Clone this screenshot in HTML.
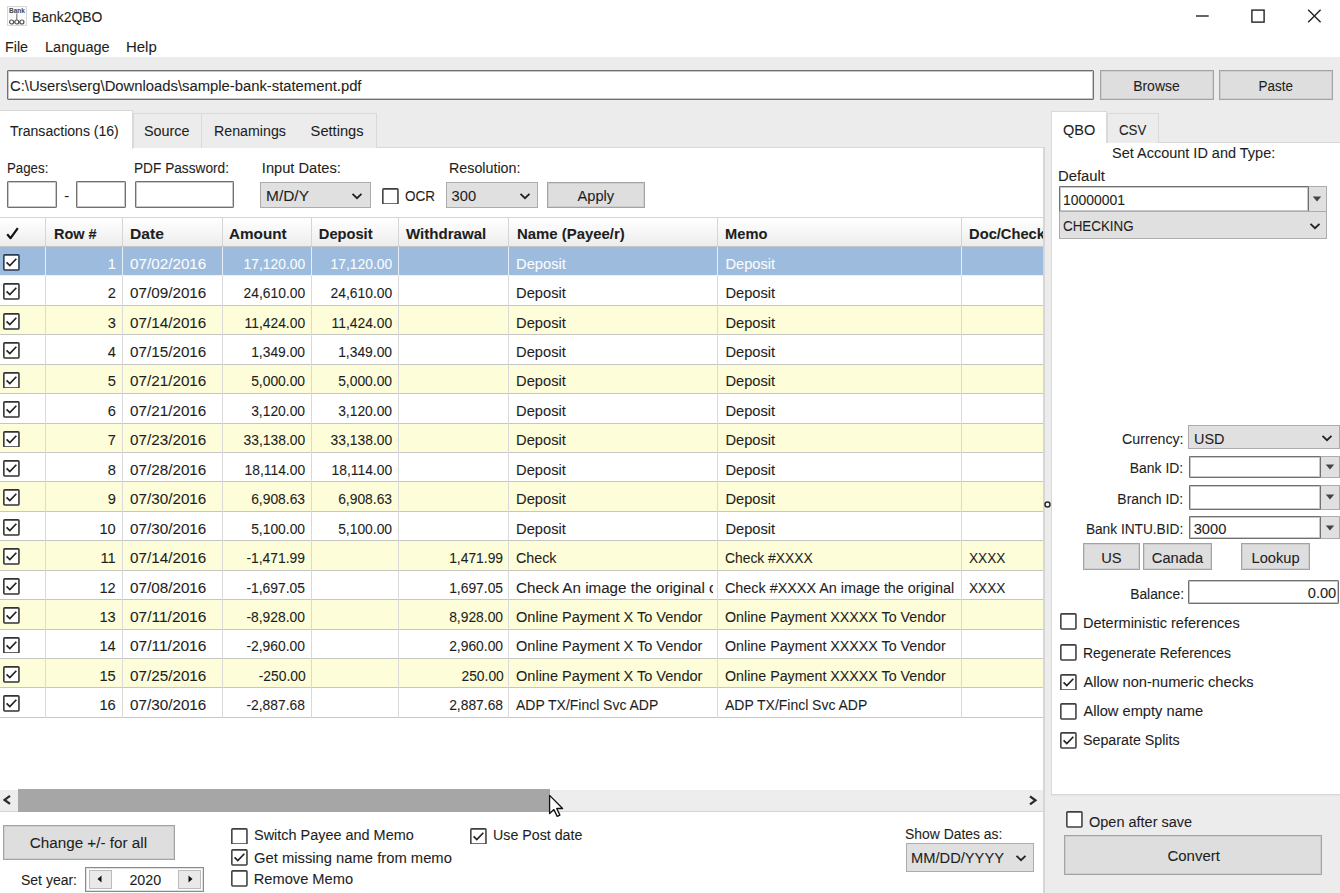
<!DOCTYPE html>
<html><head><meta charset="utf-8"><title>Bank2QBO</title>
<style>
html,body{margin:0;padding:0}
body{width:1340px;height:893px;overflow:hidden;position:relative;background:#ececec;font-family:"Liberation Sans", sans-serif;font-size:14.67px;color:#000}
body div{position:absolute;white-space:pre}
.t{-webkit-text-stroke:0.25px currentColor}
</style></head><body>
<div style="left:0px;top:0px;width:1340px;height:57px;background:#fff"></div>
<svg style="position:absolute;left:7px;top:5.5px" width="20" height="20" viewBox="0 0 20 20"><rect x="0.5" y="0.5" width="19" height="19" fill="#fafafa" stroke="#d8d8d8"/><text x="10" y="7" font-family="Liberation Sans" font-size="7.2" font-weight="700" text-anchor="middle" fill="#444" textLength="16" lengthAdjust="spacingAndGlyphs">Bank</text><line x1="9.8" y1="7.5" x2="9.8" y2="16" stroke="#777" stroke-width="1.1"/><line x1="4" y1="16" x2="16" y2="16" stroke="#777" stroke-width="1.1"/><circle cx="4.6" cy="16" r="2" fill="#fff" stroke="#555" stroke-width="1.2"/><circle cx="9.8" cy="16" r="2" fill="#fff" stroke="#555" stroke-width="1.2"/><circle cx="14.9" cy="16" r="2" fill="#fff" stroke="#555" stroke-width="1.2"/></svg>
<div style="left:32.32px;top:9.88px;font-size:14.67px;line-height:14.67px;color:#1e1e1e;-webkit-text-stroke:0.08px #1e1e1e;transform:scaleX(0.9495);transform-origin:left;">Bank2QBO</div>
<div style="left:5.42px;top:40.28px;font-size:14.67px;line-height:14.67px;color:#1e1e1e;-webkit-text-stroke:0.08px #1e1e1e;transform:scaleX(0.9748);transform-origin:left;">File</div>
<div style="left:44.82px;top:40.28px;font-size:14.67px;line-height:14.67px;color:#1e1e1e;-webkit-text-stroke:0.08px #1e1e1e;transform:scaleX(0.9913);transform-origin:left;">Language</div>
<div style="left:126.02px;top:40.28px;font-size:14.67px;line-height:14.67px;color:#1e1e1e;-webkit-text-stroke:0.08px #1e1e1e;transform:scaleX(1.0178);transform-origin:left;">Help</div>
<svg style="position:absolute;left:1190px;top:4px" width="140" height="24" viewBox="0 0 140 24"><line x1="6" y1="12" x2="18.7" y2="12" stroke="#222" stroke-width="1.4"/><rect x="61.9" y="6.1" width="12.2" height="12" fill="none" stroke="#222" stroke-width="1.4"/><path d="M118.2 5.8 L130.6 18.2 M130.6 5.8 L118.2 18.2" stroke="#222" stroke-width="1.4"/></svg>
<div style="left:7.3px;top:69.8px;width:1086.3px;height:30.4px;background:#fff;border:1px solid #707070;box-shadow:inset 0 0 0 1px rgba(130,130,130,0.45);box-sizing:border-box;border-radius:1px;"></div>
<div style="left:10.12px;top:78.78px;font-size:14.67px;line-height:14.67px;color:#1e1e1e;-webkit-text-stroke:0.08px #1e1e1e;transform:scaleX(1.0105);transform-origin:left;">C:\Users\serg\Downloads\sample-bank-statement.pdf</div>
<div style="left:1100px;top:70px;width:113.5px;height:29.5px;background:#dedede;border:1px solid #a3a3a3;box-shadow:inset 0 0 0 1px rgba(190,190,190,0.5);box-sizing:border-box;"></div>
<div style="left:1131.96px;top:78.58px;font-size:14.67px;line-height:14.67px;color:#1e1e1e;-webkit-text-stroke:0.08px #1e1e1e;transform:scaleX(0.9534);transform-origin:center;">Browse</div>
<div style="left:1218.6px;top:70px;width:114px;height:29.5px;background:#dedede;border:1px solid #a3a3a3;box-shadow:inset 0 0 0 1px rgba(190,190,190,0.5);box-sizing:border-box;"></div>
<div style="left:1256.86px;top:78.58px;font-size:14.67px;line-height:14.67px;color:#1e1e1e;-webkit-text-stroke:0.08px #1e1e1e;transform:scaleX(0.9162);transform-origin:center;">Paste</div>
<div style="left:0px;top:147px;width:1045px;height:760px;background:#fff;border:1px solid #d9d9d9;border-right:2px solid #d6d6d6;box-sizing:border-box;border-left:none"></div>
<div style="left:132.5px;top:113.4px;width:69.5px;height:34.6px;background:#ececec;border:1px solid #d9d9d9;border-bottom:none;box-sizing:border-box"></div>
<div style="left:201.5px;top:113.4px;width:97px;height:34.6px;background:#ececec;border:1px solid #d9d9d9;border-bottom:none;box-sizing:border-box;border-left:none"></div>
<div style="left:297.5px;top:113.4px;width:79px;height:34.6px;background:#ececec;border:1px solid #d9d9d9;border-bottom:none;box-sizing:border-box;border-left:none"></div>
<div style="left:0px;top:110px;width:133px;height:38.5px;background:#fff;border:1px solid #d9d9d9;border-bottom:none;border-left:none;box-sizing:border-box"></div>
<div style="left:10.32px;top:124.28px;font-size:14.67px;line-height:14.67px;color:#1e1e1e;-webkit-text-stroke:0.08px #1e1e1e;transform:scaleX(0.9586);transform-origin:left;">Transactions (16)</div>
<div style="left:143.92px;top:124.28px;font-size:14.67px;line-height:14.67px;color:#1e1e1e;-webkit-text-stroke:0.08px #1e1e1e;transform:scaleX(0.9803);transform-origin:left;">Source</div>
<div style="left:214.42px;top:124.28px;font-size:14.67px;line-height:14.67px;color:#1e1e1e;-webkit-text-stroke:0.08px #1e1e1e;transform:scaleX(0.9701);transform-origin:left;">Renamings</div>
<div style="left:310.62px;top:124.28px;font-size:14.67px;line-height:14.67px;color:#1e1e1e;-webkit-text-stroke:0.08px #1e1e1e;">Settings</div>
<div style="left:6.92px;top:161.48px;font-size:14.67px;line-height:14.67px;color:#1e1e1e;-webkit-text-stroke:0.08px #1e1e1e;transform:scaleX(0.9055);transform-origin:left;">Pages:</div>
<div style="left:134.22px;top:161.48px;font-size:14.67px;line-height:14.67px;color:#1e1e1e;-webkit-text-stroke:0.08px #1e1e1e;transform:scaleX(0.9328);transform-origin:left;">PDF Password:</div>
<div style="left:261.82px;top:161.48px;font-size:14.67px;line-height:14.67px;color:#1e1e1e;-webkit-text-stroke:0.08px #1e1e1e;">Input Dates:</div>
<div style="left:448.62px;top:161.48px;font-size:14.67px;line-height:14.67px;color:#1e1e1e;-webkit-text-stroke:0.08px #1e1e1e;transform:scaleX(0.9741);transform-origin:left;">Resolution:</div>
<div style="left:7px;top:181.4px;width:50.2px;height:27px;background:#fff;border:1px solid #707070;box-shadow:inset 0 0 0 1px rgba(130,130,130,0.45);box-sizing:border-box;border-radius:1px;"></div>
<div style="left:75.5px;top:181.4px;width:50.4px;height:27px;background:#fff;border:1px solid #707070;box-shadow:inset 0 0 0 1px rgba(130,130,130,0.45);box-sizing:border-box;border-radius:1px;"></div>
<div style="left:64.15px;top:189.28px;font-size:14.67px;line-height:14.67px;color:#1e1e1e;-webkit-text-stroke:0.08px #1e1e1e;">-</div>
<div style="left:134.5px;top:181.4px;width:99.6px;height:27px;background:#fff;border:1px solid #707070;box-shadow:inset 0 0 0 1px rgba(130,130,130,0.45);box-sizing:border-box;border-radius:1px;"></div>
<div style="left:259.6px;top:181.6px;width:111.3px;height:26.6px;background:#e0e0e0;border:1px solid #acacac;box-sizing:border-box;"></div>
<div style="left:265.92px;top:189.28px;font-size:14.67px;line-height:14.67px;color:#1e1e1e;-webkit-text-stroke:0.08px #1e1e1e;transform:scaleX(1.0547);transform-origin:left;">M/D/Y</div>
<svg style="position:absolute;left:351px;top:191.5px" width="12" height="8" viewBox="0 0 12 8"><path d="M1.5 1.8 L6 6.2 L10.5 1.8" fill="none" stroke="#222" stroke-width="1.8"/></svg>
<svg style="position:absolute;left:382.3px;top:187.6px" width="16.8" height="16.8" viewBox="0 0 16 16"><rect x="0.8" y="0.8" width="14.4" height="14.4" rx="0.8" fill="#fff" stroke="#404040" stroke-width="1.5"/></svg>
<div style="left:404.92px;top:189.28px;font-size:14.67px;line-height:14.67px;color:#1e1e1e;-webkit-text-stroke:0.08px #1e1e1e;transform:scaleX(0.9225);transform-origin:left;">OCR</div>
<div style="left:446px;top:182px;width:92px;height:25.8px;background:#e0e0e0;border:1px solid #acacac;box-sizing:border-box;"></div>
<div style="left:451.62px;top:189.28px;font-size:14.67px;line-height:14.67px;color:#1e1e1e;-webkit-text-stroke:0.08px #1e1e1e;">300</div>
<svg style="position:absolute;left:519px;top:191.5px" width="12" height="8" viewBox="0 0 12 8"><path d="M1.5 1.8 L6 6.2 L10.5 1.8" fill="none" stroke="#222" stroke-width="1.8"/></svg>
<div style="left:546.9px;top:182px;width:97.8px;height:25.8px;background:#dedede;border:1px solid #a3a3a3;box-shadow:inset 0 0 0 1px rgba(190,190,190,0.5);box-sizing:border-box;"></div>
<div style="left:577.46px;top:189.28px;font-size:14.67px;line-height:14.67px;color:#1e1e1e;-webkit-text-stroke:0.08px #1e1e1e;">Apply</div>
<div style="left:0px;top:216.5px;width:1043px;height:1px;background:#d5d5d5"></div>
<div style="left:0px;top:217.5px;width:1043px;height:29px;background:linear-gradient(#ffffff,#f6f6f6 50%,#ebebeb)"></div>
<div style="left:45.1px;top:217.5px;width:1.2px;height:29px;background:#d6d6d6"></div>
<div style="left:122.3px;top:217.5px;width:1.2px;height:29px;background:#d6d6d6"></div>
<div style="left:221.8px;top:217.5px;width:1.2px;height:29px;background:#d6d6d6"></div>
<div style="left:310.8px;top:217.5px;width:1.2px;height:29px;background:#d6d6d6"></div>
<div style="left:397.5px;top:217.5px;width:1.2px;height:29px;background:#d6d6d6"></div>
<div style="left:507.5px;top:217.5px;width:1.2px;height:29px;background:#d6d6d6"></div>
<div style="left:716.7px;top:217.5px;width:1.2px;height:29px;background:#d6d6d6"></div>
<div style="left:960.9px;top:217.5px;width:1.2px;height:29px;background:#d6d6d6"></div>
<svg style="position:absolute;left:6px;top:227px" width="13" height="13" viewBox="0 0 13 13"><path d="M1.2 7.2 L4.6 11.2 L11.8 1.2" fill="none" stroke="#111" stroke-width="2.2" stroke-linejoin="round"/></svg>
<div style="left:54.02px;top:227.48px;font-size:14.67px;line-height:14.67px;color:#1e1e1e;-webkit-text-stroke:0.08px #1e1e1e;font-weight:700;transform:scaleX(0.9879);transform-origin:left;">Row #</div>
<div style="left:130.12px;top:227.48px;font-size:14.67px;line-height:14.67px;color:#1e1e1e;-webkit-text-stroke:0.08px #1e1e1e;font-weight:700;transform:scaleX(1.0655);transform-origin:left;">Date</div>
<div style="left:229.32px;top:227.48px;font-size:14.67px;line-height:14.67px;color:#1e1e1e;-webkit-text-stroke:0.08px #1e1e1e;font-weight:700;transform:scaleX(1.041);transform-origin:left;">Amount</div>
<div style="left:318.82px;top:227.48px;font-size:14.67px;line-height:14.67px;color:#1e1e1e;-webkit-text-stroke:0.08px #1e1e1e;font-weight:700;">Deposit</div>
<div style="left:406.32px;top:227.48px;font-size:14.67px;line-height:14.67px;color:#1e1e1e;-webkit-text-stroke:0.08px #1e1e1e;font-weight:700;transform:scaleX(1.0277);transform-origin:left;">Withdrawal</div>
<div style="left:516.82px;top:227.48px;font-size:14.67px;line-height:14.67px;color:#1e1e1e;-webkit-text-stroke:0.08px #1e1e1e;font-weight:700;transform:scaleX(1.0177);transform-origin:left;">Name (Payee/r)</div>
<div style="left:725.12px;top:227.48px;font-size:14.67px;line-height:14.67px;color:#1e1e1e;-webkit-text-stroke:0.08px #1e1e1e;font-weight:700;">Memo</div>
<div style="left:968.00px;top:225.48px;width:75.00px;height:20.67px;overflow:hidden"><div style="left:1.12px;top:2px;font-size:14.67px;line-height:14.67px;color:#1e1e1e;-webkit-text-stroke:0.08px #1e1e1e;font-weight:700;">Doc/Check</div></div>
<div style="left:0px;top:246.93px;width:1043px;height:29.436px;background:#9dbbdc"></div>
<div style="left:0px;top:275.366px;width:1043px;height:1.1px;background:#e8f0f8"></div>
<div style="left:45.1px;top:246.93px;width:1.2px;height:29.436px;background:#e6eef8"></div>
<div style="left:122.3px;top:246.93px;width:1.2px;height:29.436px;background:#e6eef8"></div>
<div style="left:221.8px;top:246.93px;width:1.2px;height:29.436px;background:#e6eef8"></div>
<div style="left:310.8px;top:246.93px;width:1.2px;height:29.436px;background:#e6eef8"></div>
<div style="left:397.5px;top:246.93px;width:1.2px;height:29.436px;background:#e6eef8"></div>
<div style="left:507.5px;top:246.93px;width:1.2px;height:29.436px;background:#e6eef8"></div>
<div style="left:716.7px;top:246.93px;width:1.2px;height:29.436px;background:#e6eef8"></div>
<div style="left:960.9px;top:246.93px;width:1.2px;height:29.436px;background:#e6eef8"></div>
<svg style="position:absolute;left:3.2px;top:253.93px" width="16.8" height="16.8" viewBox="0 0 16 16"><rect x="0.8" y="0.8" width="14.4" height="14.4" rx="0.8" fill="#fff" stroke="#2a3a50" stroke-width="1.5"/><path d="M3.4 8.0 L6.5 11.1 L12.7 4.5" fill="none" stroke="#222" stroke-width="1.6"/></svg>
<div style="left:107.63px;top:256.71px;font-size:14.67px;line-height:14.67px;color:#fbfdff;-webkit-text-stroke:0.08px #fbfdff;">1</div>
<div style="left:129.82px;top:256.71px;font-size:14.67px;line-height:14.67px;color:#fbfdff;-webkit-text-stroke:0.08px #fbfdff;transform:scaleX(1.0404);transform-origin:left;">07/02/2016</div>
<div style="left:240.08px;top:256.71px;font-size:14.67px;line-height:14.67px;color:#fbfdff;-webkit-text-stroke:0.08px #fbfdff;transform:scaleX(0.945);transform-origin:right;">17,120.00</div>
<div style="left:326.68px;top:256.71px;font-size:14.67px;line-height:14.67px;color:#fbfdff;-webkit-text-stroke:0.08px #fbfdff;transform:scaleX(0.945);transform-origin:right;">17,120.00</div>
<div style="left:515.00px;top:254.70999999999998px;width:198.00px;height:20.67px;overflow:hidden"><div style="left:1.12px;top:2px;font-size:14.67px;line-height:14.67px;color:#fbfdff;-webkit-text-stroke:0.08px #fbfdff;">Deposit</div></div>
<div style="left:724.30px;top:254.70999999999998px;width:232.70px;height:20.67px;overflow:hidden"><div style="left:1.12px;top:2px;font-size:14.67px;line-height:14.67px;color:#fbfdff;-webkit-text-stroke:0.08px #fbfdff;">Deposit</div></div>
<div style="left:0px;top:276.366px;width:1043px;height:29.436px;background:#ffffff"></div>
<div style="left:0px;top:304.80199999999996px;width:1043px;height:1.1px;background:#c6c6c2"></div>
<div style="left:45.1px;top:276.366px;width:1.2px;height:29.436px;background:#d9d9d9"></div>
<div style="left:122.3px;top:276.366px;width:1.2px;height:29.436px;background:#d9d9d9"></div>
<div style="left:221.8px;top:276.366px;width:1.2px;height:29.436px;background:#d9d9d9"></div>
<div style="left:310.8px;top:276.366px;width:1.2px;height:29.436px;background:#d9d9d9"></div>
<div style="left:397.5px;top:276.366px;width:1.2px;height:29.436px;background:#d9d9d9"></div>
<div style="left:507.5px;top:276.366px;width:1.2px;height:29.436px;background:#d9d9d9"></div>
<div style="left:716.7px;top:276.366px;width:1.2px;height:29.436px;background:#d9d9d9"></div>
<div style="left:960.9px;top:276.366px;width:1.2px;height:29.436px;background:#d9d9d9"></div>
<svg style="position:absolute;left:3.2px;top:283.366px" width="16.8" height="16.8" viewBox="0 0 16 16"><rect x="0.8" y="0.8" width="14.4" height="14.4" rx="0.8" fill="#fff" stroke="#333" stroke-width="1.5"/><path d="M3.4 8.0 L6.5 11.1 L12.7 4.5" fill="none" stroke="#222" stroke-width="1.6"/></svg>
<div style="left:107.63px;top:286.15px;font-size:14.67px;line-height:14.67px;color:#1e1e1e;-webkit-text-stroke:0.08px #1e1e1e;">2</div>
<div style="left:129.82px;top:286.15px;font-size:14.67px;line-height:14.67px;color:#1e1e1e;-webkit-text-stroke:0.08px #1e1e1e;transform:scaleX(1.0404);transform-origin:left;">07/09/2016</div>
<div style="left:240.08px;top:286.15px;font-size:14.67px;line-height:14.67px;color:#1e1e1e;-webkit-text-stroke:0.08px #1e1e1e;transform:scaleX(0.945);transform-origin:right;">24,610.00</div>
<div style="left:326.68px;top:286.15px;font-size:14.67px;line-height:14.67px;color:#1e1e1e;-webkit-text-stroke:0.08px #1e1e1e;transform:scaleX(0.945);transform-origin:right;">24,610.00</div>
<div style="left:515.00px;top:284.15px;width:198.00px;height:20.67px;overflow:hidden"><div style="left:1.12px;top:2px;font-size:14.67px;line-height:14.67px;color:#1e1e1e;-webkit-text-stroke:0.08px #1e1e1e;">Deposit</div></div>
<div style="left:724.30px;top:284.15px;width:232.70px;height:20.67px;overflow:hidden"><div style="left:1.12px;top:2px;font-size:14.67px;line-height:14.67px;color:#1e1e1e;-webkit-text-stroke:0.08px #1e1e1e;">Deposit</div></div>
<div style="left:0px;top:305.802px;width:1043px;height:29.436px;background:#fdfdd9"></div>
<div style="left:0px;top:334.238px;width:1043px;height:1.1px;background:#c6c6c2"></div>
<div style="left:45.1px;top:305.802px;width:1.2px;height:29.436px;background:#d9d9d9"></div>
<div style="left:122.3px;top:305.802px;width:1.2px;height:29.436px;background:#d9d9d9"></div>
<div style="left:221.8px;top:305.802px;width:1.2px;height:29.436px;background:#d9d9d9"></div>
<div style="left:310.8px;top:305.802px;width:1.2px;height:29.436px;background:#d9d9d9"></div>
<div style="left:397.5px;top:305.802px;width:1.2px;height:29.436px;background:#d9d9d9"></div>
<div style="left:507.5px;top:305.802px;width:1.2px;height:29.436px;background:#d9d9d9"></div>
<div style="left:716.7px;top:305.802px;width:1.2px;height:29.436px;background:#d9d9d9"></div>
<div style="left:960.9px;top:305.802px;width:1.2px;height:29.436px;background:#d9d9d9"></div>
<svg style="position:absolute;left:3.2px;top:312.802px" width="16.8" height="16.8" viewBox="0 0 16 16"><rect x="0.8" y="0.8" width="14.4" height="14.4" rx="0.8" fill="#fff" stroke="#333" stroke-width="1.5"/><path d="M3.4 8.0 L6.5 11.1 L12.7 4.5" fill="none" stroke="#222" stroke-width="1.6"/></svg>
<div style="left:107.63px;top:315.58px;font-size:14.67px;line-height:14.67px;color:#1e1e1e;-webkit-text-stroke:0.08px #1e1e1e;">3</div>
<div style="left:129.82px;top:315.58px;font-size:14.67px;line-height:14.67px;color:#1e1e1e;-webkit-text-stroke:0.08px #1e1e1e;transform:scaleX(1.0404);transform-origin:left;">07/14/2016</div>
<div style="left:241.16px;top:315.58px;font-size:14.67px;line-height:14.67px;color:#1e1e1e;-webkit-text-stroke:0.08px #1e1e1e;transform:scaleX(0.945);transform-origin:right;">11,424.00</div>
<div style="left:327.76px;top:315.58px;font-size:14.67px;line-height:14.67px;color:#1e1e1e;-webkit-text-stroke:0.08px #1e1e1e;transform:scaleX(0.945);transform-origin:right;">11,424.00</div>
<div style="left:515.00px;top:313.58px;width:198.00px;height:20.67px;overflow:hidden"><div style="left:1.12px;top:2px;font-size:14.67px;line-height:14.67px;color:#1e1e1e;-webkit-text-stroke:0.08px #1e1e1e;">Deposit</div></div>
<div style="left:724.30px;top:313.58px;width:232.70px;height:20.67px;overflow:hidden"><div style="left:1.12px;top:2px;font-size:14.67px;line-height:14.67px;color:#1e1e1e;-webkit-text-stroke:0.08px #1e1e1e;">Deposit</div></div>
<div style="left:0px;top:335.238px;width:1043px;height:29.436px;background:#ffffff"></div>
<div style="left:0px;top:363.674px;width:1043px;height:1.1px;background:#c6c6c2"></div>
<div style="left:45.1px;top:335.238px;width:1.2px;height:29.436px;background:#d9d9d9"></div>
<div style="left:122.3px;top:335.238px;width:1.2px;height:29.436px;background:#d9d9d9"></div>
<div style="left:221.8px;top:335.238px;width:1.2px;height:29.436px;background:#d9d9d9"></div>
<div style="left:310.8px;top:335.238px;width:1.2px;height:29.436px;background:#d9d9d9"></div>
<div style="left:397.5px;top:335.238px;width:1.2px;height:29.436px;background:#d9d9d9"></div>
<div style="left:507.5px;top:335.238px;width:1.2px;height:29.436px;background:#d9d9d9"></div>
<div style="left:716.7px;top:335.238px;width:1.2px;height:29.436px;background:#d9d9d9"></div>
<div style="left:960.9px;top:335.238px;width:1.2px;height:29.436px;background:#d9d9d9"></div>
<svg style="position:absolute;left:3.2px;top:342.238px" width="16.8" height="16.8" viewBox="0 0 16 16"><rect x="0.8" y="0.8" width="14.4" height="14.4" rx="0.8" fill="#fff" stroke="#333" stroke-width="1.5"/><path d="M3.4 8.0 L6.5 11.1 L12.7 4.5" fill="none" stroke="#222" stroke-width="1.6"/></svg>
<div style="left:107.63px;top:345.02px;font-size:14.67px;line-height:14.67px;color:#1e1e1e;-webkit-text-stroke:0.08px #1e1e1e;">4</div>
<div style="left:129.82px;top:345.02px;font-size:14.67px;line-height:14.67px;color:#1e1e1e;-webkit-text-stroke:0.08px #1e1e1e;transform:scaleX(1.0404);transform-origin:left;">07/15/2016</div>
<div style="left:248.22px;top:345.02px;font-size:14.67px;line-height:14.67px;color:#1e1e1e;-webkit-text-stroke:0.08px #1e1e1e;transform:scaleX(0.945);transform-origin:right;">1,349.00</div>
<div style="left:334.82px;top:345.02px;font-size:14.67px;line-height:14.67px;color:#1e1e1e;-webkit-text-stroke:0.08px #1e1e1e;transform:scaleX(0.945);transform-origin:right;">1,349.00</div>
<div style="left:515.00px;top:343.02px;width:198.00px;height:20.67px;overflow:hidden"><div style="left:1.12px;top:2px;font-size:14.67px;line-height:14.67px;color:#1e1e1e;-webkit-text-stroke:0.08px #1e1e1e;">Deposit</div></div>
<div style="left:724.30px;top:343.02px;width:232.70px;height:20.67px;overflow:hidden"><div style="left:1.12px;top:2px;font-size:14.67px;line-height:14.67px;color:#1e1e1e;-webkit-text-stroke:0.08px #1e1e1e;">Deposit</div></div>
<div style="left:0px;top:364.674px;width:1043px;height:29.436px;background:#fdfdd9"></div>
<div style="left:0px;top:393.10999999999996px;width:1043px;height:1.1px;background:#c6c6c2"></div>
<div style="left:45.1px;top:364.674px;width:1.2px;height:29.436px;background:#d9d9d9"></div>
<div style="left:122.3px;top:364.674px;width:1.2px;height:29.436px;background:#d9d9d9"></div>
<div style="left:221.8px;top:364.674px;width:1.2px;height:29.436px;background:#d9d9d9"></div>
<div style="left:310.8px;top:364.674px;width:1.2px;height:29.436px;background:#d9d9d9"></div>
<div style="left:397.5px;top:364.674px;width:1.2px;height:29.436px;background:#d9d9d9"></div>
<div style="left:507.5px;top:364.674px;width:1.2px;height:29.436px;background:#d9d9d9"></div>
<div style="left:716.7px;top:364.674px;width:1.2px;height:29.436px;background:#d9d9d9"></div>
<div style="left:960.9px;top:364.674px;width:1.2px;height:29.436px;background:#d9d9d9"></div>
<svg style="position:absolute;left:3.2px;top:371.674px" width="16.8" height="16.8" viewBox="0 0 16 16"><rect x="0.8" y="0.8" width="14.4" height="14.4" rx="0.8" fill="#fff" stroke="#333" stroke-width="1.5"/><path d="M3.4 8.0 L6.5 11.1 L12.7 4.5" fill="none" stroke="#222" stroke-width="1.6"/></svg>
<div style="left:107.63px;top:374.46px;font-size:14.67px;line-height:14.67px;color:#1e1e1e;-webkit-text-stroke:0.08px #1e1e1e;">5</div>
<div style="left:129.82px;top:374.46px;font-size:14.67px;line-height:14.67px;color:#1e1e1e;-webkit-text-stroke:0.08px #1e1e1e;transform:scaleX(1.0404);transform-origin:left;">07/21/2016</div>
<div style="left:248.22px;top:374.46px;font-size:14.67px;line-height:14.67px;color:#1e1e1e;-webkit-text-stroke:0.08px #1e1e1e;transform:scaleX(0.945);transform-origin:right;">5,000.00</div>
<div style="left:334.82px;top:374.46px;font-size:14.67px;line-height:14.67px;color:#1e1e1e;-webkit-text-stroke:0.08px #1e1e1e;transform:scaleX(0.945);transform-origin:right;">5,000.00</div>
<div style="left:515.00px;top:372.46px;width:198.00px;height:20.67px;overflow:hidden"><div style="left:1.12px;top:2px;font-size:14.67px;line-height:14.67px;color:#1e1e1e;-webkit-text-stroke:0.08px #1e1e1e;">Deposit</div></div>
<div style="left:724.30px;top:372.46px;width:232.70px;height:20.67px;overflow:hidden"><div style="left:1.12px;top:2px;font-size:14.67px;line-height:14.67px;color:#1e1e1e;-webkit-text-stroke:0.08px #1e1e1e;">Deposit</div></div>
<div style="left:0px;top:394.11px;width:1043px;height:29.436px;background:#ffffff"></div>
<div style="left:0px;top:422.546px;width:1043px;height:1.1px;background:#c6c6c2"></div>
<div style="left:45.1px;top:394.11px;width:1.2px;height:29.436px;background:#d9d9d9"></div>
<div style="left:122.3px;top:394.11px;width:1.2px;height:29.436px;background:#d9d9d9"></div>
<div style="left:221.8px;top:394.11px;width:1.2px;height:29.436px;background:#d9d9d9"></div>
<div style="left:310.8px;top:394.11px;width:1.2px;height:29.436px;background:#d9d9d9"></div>
<div style="left:397.5px;top:394.11px;width:1.2px;height:29.436px;background:#d9d9d9"></div>
<div style="left:507.5px;top:394.11px;width:1.2px;height:29.436px;background:#d9d9d9"></div>
<div style="left:716.7px;top:394.11px;width:1.2px;height:29.436px;background:#d9d9d9"></div>
<div style="left:960.9px;top:394.11px;width:1.2px;height:29.436px;background:#d9d9d9"></div>
<svg style="position:absolute;left:3.2px;top:401.11px" width="16.8" height="16.8" viewBox="0 0 16 16"><rect x="0.8" y="0.8" width="14.4" height="14.4" rx="0.8" fill="#fff" stroke="#333" stroke-width="1.5"/><path d="M3.4 8.0 L6.5 11.1 L12.7 4.5" fill="none" stroke="#222" stroke-width="1.6"/></svg>
<div style="left:107.63px;top:403.89px;font-size:14.67px;line-height:14.67px;color:#1e1e1e;-webkit-text-stroke:0.08px #1e1e1e;">6</div>
<div style="left:129.82px;top:403.89px;font-size:14.67px;line-height:14.67px;color:#1e1e1e;-webkit-text-stroke:0.08px #1e1e1e;transform:scaleX(1.0404);transform-origin:left;">07/21/2016</div>
<div style="left:248.22px;top:403.89px;font-size:14.67px;line-height:14.67px;color:#1e1e1e;-webkit-text-stroke:0.08px #1e1e1e;transform:scaleX(0.945);transform-origin:right;">3,120.00</div>
<div style="left:334.82px;top:403.89px;font-size:14.67px;line-height:14.67px;color:#1e1e1e;-webkit-text-stroke:0.08px #1e1e1e;transform:scaleX(0.945);transform-origin:right;">3,120.00</div>
<div style="left:515.00px;top:401.89px;width:198.00px;height:20.67px;overflow:hidden"><div style="left:1.12px;top:2px;font-size:14.67px;line-height:14.67px;color:#1e1e1e;-webkit-text-stroke:0.08px #1e1e1e;">Deposit</div></div>
<div style="left:724.30px;top:401.89px;width:232.70px;height:20.67px;overflow:hidden"><div style="left:1.12px;top:2px;font-size:14.67px;line-height:14.67px;color:#1e1e1e;-webkit-text-stroke:0.08px #1e1e1e;">Deposit</div></div>
<div style="left:0px;top:423.546px;width:1043px;height:29.436px;background:#fdfdd9"></div>
<div style="left:0px;top:451.98199999999997px;width:1043px;height:1.1px;background:#c6c6c2"></div>
<div style="left:45.1px;top:423.546px;width:1.2px;height:29.436px;background:#d9d9d9"></div>
<div style="left:122.3px;top:423.546px;width:1.2px;height:29.436px;background:#d9d9d9"></div>
<div style="left:221.8px;top:423.546px;width:1.2px;height:29.436px;background:#d9d9d9"></div>
<div style="left:310.8px;top:423.546px;width:1.2px;height:29.436px;background:#d9d9d9"></div>
<div style="left:397.5px;top:423.546px;width:1.2px;height:29.436px;background:#d9d9d9"></div>
<div style="left:507.5px;top:423.546px;width:1.2px;height:29.436px;background:#d9d9d9"></div>
<div style="left:716.7px;top:423.546px;width:1.2px;height:29.436px;background:#d9d9d9"></div>
<div style="left:960.9px;top:423.546px;width:1.2px;height:29.436px;background:#d9d9d9"></div>
<svg style="position:absolute;left:3.2px;top:430.546px" width="16.8" height="16.8" viewBox="0 0 16 16"><rect x="0.8" y="0.8" width="14.4" height="14.4" rx="0.8" fill="#fff" stroke="#333" stroke-width="1.5"/><path d="M3.4 8.0 L6.5 11.1 L12.7 4.5" fill="none" stroke="#222" stroke-width="1.6"/></svg>
<div style="left:107.63px;top:433.33px;font-size:14.67px;line-height:14.67px;color:#1e1e1e;-webkit-text-stroke:0.08px #1e1e1e;">7</div>
<div style="left:129.82px;top:433.33px;font-size:14.67px;line-height:14.67px;color:#1e1e1e;-webkit-text-stroke:0.08px #1e1e1e;transform:scaleX(1.0404);transform-origin:left;">07/23/2016</div>
<div style="left:240.08px;top:433.33px;font-size:14.67px;line-height:14.67px;color:#1e1e1e;-webkit-text-stroke:0.08px #1e1e1e;transform:scaleX(0.945);transform-origin:right;">33,138.00</div>
<div style="left:326.68px;top:433.33px;font-size:14.67px;line-height:14.67px;color:#1e1e1e;-webkit-text-stroke:0.08px #1e1e1e;transform:scaleX(0.945);transform-origin:right;">33,138.00</div>
<div style="left:515.00px;top:431.33px;width:198.00px;height:20.67px;overflow:hidden"><div style="left:1.12px;top:2px;font-size:14.67px;line-height:14.67px;color:#1e1e1e;-webkit-text-stroke:0.08px #1e1e1e;">Deposit</div></div>
<div style="left:724.30px;top:431.33px;width:232.70px;height:20.67px;overflow:hidden"><div style="left:1.12px;top:2px;font-size:14.67px;line-height:14.67px;color:#1e1e1e;-webkit-text-stroke:0.08px #1e1e1e;">Deposit</div></div>
<div style="left:0px;top:452.98199999999997px;width:1043px;height:29.436px;background:#ffffff"></div>
<div style="left:0px;top:481.41799999999995px;width:1043px;height:1.1px;background:#c6c6c2"></div>
<div style="left:45.1px;top:452.98199999999997px;width:1.2px;height:29.436px;background:#d9d9d9"></div>
<div style="left:122.3px;top:452.98199999999997px;width:1.2px;height:29.436px;background:#d9d9d9"></div>
<div style="left:221.8px;top:452.98199999999997px;width:1.2px;height:29.436px;background:#d9d9d9"></div>
<div style="left:310.8px;top:452.98199999999997px;width:1.2px;height:29.436px;background:#d9d9d9"></div>
<div style="left:397.5px;top:452.98199999999997px;width:1.2px;height:29.436px;background:#d9d9d9"></div>
<div style="left:507.5px;top:452.98199999999997px;width:1.2px;height:29.436px;background:#d9d9d9"></div>
<div style="left:716.7px;top:452.98199999999997px;width:1.2px;height:29.436px;background:#d9d9d9"></div>
<div style="left:960.9px;top:452.98199999999997px;width:1.2px;height:29.436px;background:#d9d9d9"></div>
<svg style="position:absolute;left:3.2px;top:459.98199999999997px" width="16.8" height="16.8" viewBox="0 0 16 16"><rect x="0.8" y="0.8" width="14.4" height="14.4" rx="0.8" fill="#fff" stroke="#333" stroke-width="1.5"/><path d="M3.4 8.0 L6.5 11.1 L12.7 4.5" fill="none" stroke="#222" stroke-width="1.6"/></svg>
<div style="left:107.63px;top:462.76px;font-size:14.67px;line-height:14.67px;color:#1e1e1e;-webkit-text-stroke:0.08px #1e1e1e;">8</div>
<div style="left:129.82px;top:462.76px;font-size:14.67px;line-height:14.67px;color:#1e1e1e;-webkit-text-stroke:0.08px #1e1e1e;transform:scaleX(1.0404);transform-origin:left;">07/28/2016</div>
<div style="left:241.16px;top:462.76px;font-size:14.67px;line-height:14.67px;color:#1e1e1e;-webkit-text-stroke:0.08px #1e1e1e;transform:scaleX(0.945);transform-origin:right;">18,114.00</div>
<div style="left:327.76px;top:462.76px;font-size:14.67px;line-height:14.67px;color:#1e1e1e;-webkit-text-stroke:0.08px #1e1e1e;transform:scaleX(0.945);transform-origin:right;">18,114.00</div>
<div style="left:515.00px;top:460.76px;width:198.00px;height:20.67px;overflow:hidden"><div style="left:1.12px;top:2px;font-size:14.67px;line-height:14.67px;color:#1e1e1e;-webkit-text-stroke:0.08px #1e1e1e;">Deposit</div></div>
<div style="left:724.30px;top:460.76px;width:232.70px;height:20.67px;overflow:hidden"><div style="left:1.12px;top:2px;font-size:14.67px;line-height:14.67px;color:#1e1e1e;-webkit-text-stroke:0.08px #1e1e1e;">Deposit</div></div>
<div style="left:0px;top:482.418px;width:1043px;height:29.436px;background:#fdfdd9"></div>
<div style="left:0px;top:510.854px;width:1043px;height:1.1px;background:#c6c6c2"></div>
<div style="left:45.1px;top:482.418px;width:1.2px;height:29.436px;background:#d9d9d9"></div>
<div style="left:122.3px;top:482.418px;width:1.2px;height:29.436px;background:#d9d9d9"></div>
<div style="left:221.8px;top:482.418px;width:1.2px;height:29.436px;background:#d9d9d9"></div>
<div style="left:310.8px;top:482.418px;width:1.2px;height:29.436px;background:#d9d9d9"></div>
<div style="left:397.5px;top:482.418px;width:1.2px;height:29.436px;background:#d9d9d9"></div>
<div style="left:507.5px;top:482.418px;width:1.2px;height:29.436px;background:#d9d9d9"></div>
<div style="left:716.7px;top:482.418px;width:1.2px;height:29.436px;background:#d9d9d9"></div>
<div style="left:960.9px;top:482.418px;width:1.2px;height:29.436px;background:#d9d9d9"></div>
<svg style="position:absolute;left:3.2px;top:489.418px" width="16.8" height="16.8" viewBox="0 0 16 16"><rect x="0.8" y="0.8" width="14.4" height="14.4" rx="0.8" fill="#fff" stroke="#333" stroke-width="1.5"/><path d="M3.4 8.0 L6.5 11.1 L12.7 4.5" fill="none" stroke="#222" stroke-width="1.6"/></svg>
<div style="left:107.63px;top:492.2px;font-size:14.67px;line-height:14.67px;color:#1e1e1e;-webkit-text-stroke:0.08px #1e1e1e;">9</div>
<div style="left:129.82px;top:492.2px;font-size:14.67px;line-height:14.67px;color:#1e1e1e;-webkit-text-stroke:0.08px #1e1e1e;transform:scaleX(1.0404);transform-origin:left;">07/30/2016</div>
<div style="left:248.22px;top:492.2px;font-size:14.67px;line-height:14.67px;color:#1e1e1e;-webkit-text-stroke:0.08px #1e1e1e;transform:scaleX(0.945);transform-origin:right;">6,908.63</div>
<div style="left:334.82px;top:492.2px;font-size:14.67px;line-height:14.67px;color:#1e1e1e;-webkit-text-stroke:0.08px #1e1e1e;transform:scaleX(0.945);transform-origin:right;">6,908.63</div>
<div style="left:515.00px;top:490.2px;width:198.00px;height:20.67px;overflow:hidden"><div style="left:1.12px;top:2px;font-size:14.67px;line-height:14.67px;color:#1e1e1e;-webkit-text-stroke:0.08px #1e1e1e;">Deposit</div></div>
<div style="left:724.30px;top:490.2px;width:232.70px;height:20.67px;overflow:hidden"><div style="left:1.12px;top:2px;font-size:14.67px;line-height:14.67px;color:#1e1e1e;-webkit-text-stroke:0.08px #1e1e1e;">Deposit</div></div>
<div style="left:0px;top:511.854px;width:1043px;height:29.436px;background:#ffffff"></div>
<div style="left:0px;top:540.29px;width:1043px;height:1.1px;background:#c6c6c2"></div>
<div style="left:45.1px;top:511.854px;width:1.2px;height:29.436px;background:#d9d9d9"></div>
<div style="left:122.3px;top:511.854px;width:1.2px;height:29.436px;background:#d9d9d9"></div>
<div style="left:221.8px;top:511.854px;width:1.2px;height:29.436px;background:#d9d9d9"></div>
<div style="left:310.8px;top:511.854px;width:1.2px;height:29.436px;background:#d9d9d9"></div>
<div style="left:397.5px;top:511.854px;width:1.2px;height:29.436px;background:#d9d9d9"></div>
<div style="left:507.5px;top:511.854px;width:1.2px;height:29.436px;background:#d9d9d9"></div>
<div style="left:716.7px;top:511.854px;width:1.2px;height:29.436px;background:#d9d9d9"></div>
<div style="left:960.9px;top:511.854px;width:1.2px;height:29.436px;background:#d9d9d9"></div>
<svg style="position:absolute;left:3.2px;top:518.854px" width="16.8" height="16.8" viewBox="0 0 16 16"><rect x="0.8" y="0.8" width="14.4" height="14.4" rx="0.8" fill="#fff" stroke="#333" stroke-width="1.5"/><path d="M3.4 8.0 L6.5 11.1 L12.7 4.5" fill="none" stroke="#222" stroke-width="1.6"/></svg>
<div style="left:99.47px;top:521.64px;font-size:14.67px;line-height:14.67px;color:#1e1e1e;-webkit-text-stroke:0.08px #1e1e1e;">10</div>
<div style="left:129.82px;top:521.64px;font-size:14.67px;line-height:14.67px;color:#1e1e1e;-webkit-text-stroke:0.08px #1e1e1e;transform:scaleX(1.0404);transform-origin:left;">07/30/2016</div>
<div style="left:248.22px;top:521.64px;font-size:14.67px;line-height:14.67px;color:#1e1e1e;-webkit-text-stroke:0.08px #1e1e1e;transform:scaleX(0.945);transform-origin:right;">5,100.00</div>
<div style="left:334.82px;top:521.64px;font-size:14.67px;line-height:14.67px;color:#1e1e1e;-webkit-text-stroke:0.08px #1e1e1e;transform:scaleX(0.945);transform-origin:right;">5,100.00</div>
<div style="left:515.00px;top:519.64px;width:198.00px;height:20.67px;overflow:hidden"><div style="left:1.12px;top:2px;font-size:14.67px;line-height:14.67px;color:#1e1e1e;-webkit-text-stroke:0.08px #1e1e1e;">Deposit</div></div>
<div style="left:724.30px;top:519.64px;width:232.70px;height:20.67px;overflow:hidden"><div style="left:1.12px;top:2px;font-size:14.67px;line-height:14.67px;color:#1e1e1e;-webkit-text-stroke:0.08px #1e1e1e;">Deposit</div></div>
<div style="left:0px;top:541.29px;width:1043px;height:29.436px;background:#fdfdd9"></div>
<div style="left:0px;top:569.726px;width:1043px;height:1.1px;background:#c6c6c2"></div>
<div style="left:45.1px;top:541.29px;width:1.2px;height:29.436px;background:#d9d9d9"></div>
<div style="left:122.3px;top:541.29px;width:1.2px;height:29.436px;background:#d9d9d9"></div>
<div style="left:221.8px;top:541.29px;width:1.2px;height:29.436px;background:#d9d9d9"></div>
<div style="left:310.8px;top:541.29px;width:1.2px;height:29.436px;background:#d9d9d9"></div>
<div style="left:397.5px;top:541.29px;width:1.2px;height:29.436px;background:#d9d9d9"></div>
<div style="left:507.5px;top:541.29px;width:1.2px;height:29.436px;background:#d9d9d9"></div>
<div style="left:716.7px;top:541.29px;width:1.2px;height:29.436px;background:#d9d9d9"></div>
<div style="left:960.9px;top:541.29px;width:1.2px;height:29.436px;background:#d9d9d9"></div>
<svg style="position:absolute;left:3.2px;top:548.29px" width="16.8" height="16.8" viewBox="0 0 16 16"><rect x="0.8" y="0.8" width="14.4" height="14.4" rx="0.8" fill="#fff" stroke="#333" stroke-width="1.5"/><path d="M3.4 8.0 L6.5 11.1 L12.7 4.5" fill="none" stroke="#222" stroke-width="1.6"/></svg>
<div style="left:100.57px;top:551.07px;font-size:14.67px;line-height:14.67px;color:#1e1e1e;-webkit-text-stroke:0.08px #1e1e1e;">11</div>
<div style="left:129.82px;top:551.07px;font-size:14.67px;line-height:14.67px;color:#1e1e1e;-webkit-text-stroke:0.08px #1e1e1e;transform:scaleX(1.0404);transform-origin:left;">07/14/2016</div>
<div style="left:243.35px;top:551.07px;font-size:14.67px;line-height:14.67px;color:#1e1e1e;-webkit-text-stroke:0.08px #1e1e1e;transform:scaleX(0.945);transform-origin:right;">-1,471.99</div>
<div style="left:446.32px;top:551.07px;font-size:14.67px;line-height:14.67px;color:#1e1e1e;-webkit-text-stroke:0.08px #1e1e1e;transform:scaleX(0.945);transform-origin:right;">1,471.99</div>
<div style="left:515.00px;top:549.07px;width:198.00px;height:20.67px;overflow:hidden"><div style="left:1.12px;top:2px;font-size:14.67px;line-height:14.67px;color:#1e1e1e;-webkit-text-stroke:0.08px #1e1e1e;transform:scaleX(0.9731);transform-origin:left;">Check</div></div>
<div style="left:724.30px;top:549.07px;width:232.70px;height:20.67px;overflow:hidden"><div style="left:1.12px;top:2px;font-size:14.67px;line-height:14.67px;color:#1e1e1e;-webkit-text-stroke:0.08px #1e1e1e;transform:scaleX(0.9441);transform-origin:left;">Check #XXXX</div></div>
<div style="left:968.92px;top:551.07px;font-size:14.67px;line-height:14.67px;color:#1e1e1e;-webkit-text-stroke:0.08px #1e1e1e;transform:scaleX(0.9298);transform-origin:left;">XXXX</div>
<div style="left:0px;top:570.726px;width:1043px;height:29.436px;background:#ffffff"></div>
<div style="left:0px;top:599.162px;width:1043px;height:1.1px;background:#c6c6c2"></div>
<div style="left:45.1px;top:570.726px;width:1.2px;height:29.436px;background:#d9d9d9"></div>
<div style="left:122.3px;top:570.726px;width:1.2px;height:29.436px;background:#d9d9d9"></div>
<div style="left:221.8px;top:570.726px;width:1.2px;height:29.436px;background:#d9d9d9"></div>
<div style="left:310.8px;top:570.726px;width:1.2px;height:29.436px;background:#d9d9d9"></div>
<div style="left:397.5px;top:570.726px;width:1.2px;height:29.436px;background:#d9d9d9"></div>
<div style="left:507.5px;top:570.726px;width:1.2px;height:29.436px;background:#d9d9d9"></div>
<div style="left:716.7px;top:570.726px;width:1.2px;height:29.436px;background:#d9d9d9"></div>
<div style="left:960.9px;top:570.726px;width:1.2px;height:29.436px;background:#d9d9d9"></div>
<svg style="position:absolute;left:3.2px;top:577.726px" width="16.8" height="16.8" viewBox="0 0 16 16"><rect x="0.8" y="0.8" width="14.4" height="14.4" rx="0.8" fill="#fff" stroke="#333" stroke-width="1.5"/><path d="M3.4 8.0 L6.5 11.1 L12.7 4.5" fill="none" stroke="#222" stroke-width="1.6"/></svg>
<div style="left:99.47px;top:580.51px;font-size:14.67px;line-height:14.67px;color:#1e1e1e;-webkit-text-stroke:0.08px #1e1e1e;">12</div>
<div style="left:129.82px;top:580.51px;font-size:14.67px;line-height:14.67px;color:#1e1e1e;-webkit-text-stroke:0.08px #1e1e1e;transform:scaleX(1.0404);transform-origin:left;">07/08/2016</div>
<div style="left:243.35px;top:580.51px;font-size:14.67px;line-height:14.67px;color:#1e1e1e;-webkit-text-stroke:0.08px #1e1e1e;transform:scaleX(0.945);transform-origin:right;">-1,697.05</div>
<div style="left:446.32px;top:580.51px;font-size:14.67px;line-height:14.67px;color:#1e1e1e;-webkit-text-stroke:0.08px #1e1e1e;transform:scaleX(0.945);transform-origin:right;">1,697.05</div>
<div style="left:515.00px;top:578.51px;width:198.00px;height:20.67px;overflow:hidden"><div style="left:1.12px;top:2px;font-size:14.67px;line-height:14.67px;color:#1e1e1e;-webkit-text-stroke:0.08px #1e1e1e;transform:scaleX(1.035);transform-origin:left;">Check An image the original of</div></div>
<div style="left:724.30px;top:578.51px;width:232.70px;height:20.67px;overflow:hidden"><div style="left:1.12px;top:2px;font-size:14.67px;line-height:14.67px;color:#1e1e1e;-webkit-text-stroke:0.08px #1e1e1e;transform:scaleX(0.98);transform-origin:left;">Check #XXXX An image the original of</div></div>
<div style="left:968.92px;top:580.51px;font-size:14.67px;line-height:14.67px;color:#1e1e1e;-webkit-text-stroke:0.08px #1e1e1e;transform:scaleX(0.9298);transform-origin:left;">XXXX</div>
<div style="left:0px;top:600.162px;width:1043px;height:29.436px;background:#fdfdd9"></div>
<div style="left:0px;top:628.5980000000001px;width:1043px;height:1.1px;background:#c6c6c2"></div>
<div style="left:45.1px;top:600.162px;width:1.2px;height:29.436px;background:#d9d9d9"></div>
<div style="left:122.3px;top:600.162px;width:1.2px;height:29.436px;background:#d9d9d9"></div>
<div style="left:221.8px;top:600.162px;width:1.2px;height:29.436px;background:#d9d9d9"></div>
<div style="left:310.8px;top:600.162px;width:1.2px;height:29.436px;background:#d9d9d9"></div>
<div style="left:397.5px;top:600.162px;width:1.2px;height:29.436px;background:#d9d9d9"></div>
<div style="left:507.5px;top:600.162px;width:1.2px;height:29.436px;background:#d9d9d9"></div>
<div style="left:716.7px;top:600.162px;width:1.2px;height:29.436px;background:#d9d9d9"></div>
<div style="left:960.9px;top:600.162px;width:1.2px;height:29.436px;background:#d9d9d9"></div>
<svg style="position:absolute;left:3.2px;top:607.162px" width="16.8" height="16.8" viewBox="0 0 16 16"><rect x="0.8" y="0.8" width="14.4" height="14.4" rx="0.8" fill="#fff" stroke="#333" stroke-width="1.5"/><path d="M3.4 8.0 L6.5 11.1 L12.7 4.5" fill="none" stroke="#222" stroke-width="1.6"/></svg>
<div style="left:99.47px;top:609.94px;font-size:14.67px;line-height:14.67px;color:#1e1e1e;-webkit-text-stroke:0.08px #1e1e1e;">13</div>
<div style="left:129.82px;top:609.94px;font-size:14.67px;line-height:14.67px;color:#1e1e1e;-webkit-text-stroke:0.08px #1e1e1e;transform:scaleX(1.0565);transform-origin:left;">07/11/2016</div>
<div style="left:243.35px;top:609.94px;font-size:14.67px;line-height:14.67px;color:#1e1e1e;-webkit-text-stroke:0.08px #1e1e1e;transform:scaleX(0.945);transform-origin:right;">-8,928.00</div>
<div style="left:446.32px;top:609.94px;font-size:14.67px;line-height:14.67px;color:#1e1e1e;-webkit-text-stroke:0.08px #1e1e1e;transform:scaleX(0.945);transform-origin:right;">8,928.00</div>
<div style="left:515.00px;top:607.94px;width:198.00px;height:20.67px;overflow:hidden"><div style="left:1.12px;top:2px;font-size:14.67px;line-height:14.67px;color:#1e1e1e;-webkit-text-stroke:0.08px #1e1e1e;transform:scaleX(0.9921);transform-origin:left;">Online Payment X To Vendor</div></div>
<div style="left:724.30px;top:607.94px;width:232.70px;height:20.67px;overflow:hidden"><div style="left:1.12px;top:2px;font-size:14.67px;line-height:14.67px;color:#1e1e1e;-webkit-text-stroke:0.08px #1e1e1e;transform:scaleX(0.9722);transform-origin:left;">Online Payment XXXXX To Vendor</div></div>
<div style="left:0px;top:629.598px;width:1043px;height:29.436px;background:#ffffff"></div>
<div style="left:0px;top:658.034px;width:1043px;height:1.1px;background:#c6c6c2"></div>
<div style="left:45.1px;top:629.598px;width:1.2px;height:29.436px;background:#d9d9d9"></div>
<div style="left:122.3px;top:629.598px;width:1.2px;height:29.436px;background:#d9d9d9"></div>
<div style="left:221.8px;top:629.598px;width:1.2px;height:29.436px;background:#d9d9d9"></div>
<div style="left:310.8px;top:629.598px;width:1.2px;height:29.436px;background:#d9d9d9"></div>
<div style="left:397.5px;top:629.598px;width:1.2px;height:29.436px;background:#d9d9d9"></div>
<div style="left:507.5px;top:629.598px;width:1.2px;height:29.436px;background:#d9d9d9"></div>
<div style="left:716.7px;top:629.598px;width:1.2px;height:29.436px;background:#d9d9d9"></div>
<div style="left:960.9px;top:629.598px;width:1.2px;height:29.436px;background:#d9d9d9"></div>
<svg style="position:absolute;left:3.2px;top:636.598px" width="16.8" height="16.8" viewBox="0 0 16 16"><rect x="0.8" y="0.8" width="14.4" height="14.4" rx="0.8" fill="#fff" stroke="#333" stroke-width="1.5"/><path d="M3.4 8.0 L6.5 11.1 L12.7 4.5" fill="none" stroke="#222" stroke-width="1.6"/></svg>
<div style="left:99.47px;top:639.38px;font-size:14.67px;line-height:14.67px;color:#1e1e1e;-webkit-text-stroke:0.08px #1e1e1e;">14</div>
<div style="left:129.82px;top:639.38px;font-size:14.67px;line-height:14.67px;color:#1e1e1e;-webkit-text-stroke:0.08px #1e1e1e;transform:scaleX(1.0565);transform-origin:left;">07/11/2016</div>
<div style="left:243.35px;top:639.38px;font-size:14.67px;line-height:14.67px;color:#1e1e1e;-webkit-text-stroke:0.08px #1e1e1e;transform:scaleX(0.945);transform-origin:right;">-2,960.00</div>
<div style="left:446.32px;top:639.38px;font-size:14.67px;line-height:14.67px;color:#1e1e1e;-webkit-text-stroke:0.08px #1e1e1e;transform:scaleX(0.945);transform-origin:right;">2,960.00</div>
<div style="left:515.00px;top:637.38px;width:198.00px;height:20.67px;overflow:hidden"><div style="left:1.12px;top:2px;font-size:14.67px;line-height:14.67px;color:#1e1e1e;-webkit-text-stroke:0.08px #1e1e1e;transform:scaleX(0.9921);transform-origin:left;">Online Payment X To Vendor</div></div>
<div style="left:724.30px;top:637.38px;width:232.70px;height:20.67px;overflow:hidden"><div style="left:1.12px;top:2px;font-size:14.67px;line-height:14.67px;color:#1e1e1e;-webkit-text-stroke:0.08px #1e1e1e;transform:scaleX(0.9722);transform-origin:left;">Online Payment XXXXX To Vendor</div></div>
<div style="left:0px;top:659.034px;width:1043px;height:29.436px;background:#fdfdd9"></div>
<div style="left:0px;top:687.47px;width:1043px;height:1.1px;background:#c6c6c2"></div>
<div style="left:45.1px;top:659.034px;width:1.2px;height:29.436px;background:#d9d9d9"></div>
<div style="left:122.3px;top:659.034px;width:1.2px;height:29.436px;background:#d9d9d9"></div>
<div style="left:221.8px;top:659.034px;width:1.2px;height:29.436px;background:#d9d9d9"></div>
<div style="left:310.8px;top:659.034px;width:1.2px;height:29.436px;background:#d9d9d9"></div>
<div style="left:397.5px;top:659.034px;width:1.2px;height:29.436px;background:#d9d9d9"></div>
<div style="left:507.5px;top:659.034px;width:1.2px;height:29.436px;background:#d9d9d9"></div>
<div style="left:716.7px;top:659.034px;width:1.2px;height:29.436px;background:#d9d9d9"></div>
<div style="left:960.9px;top:659.034px;width:1.2px;height:29.436px;background:#d9d9d9"></div>
<svg style="position:absolute;left:3.2px;top:666.034px" width="16.8" height="16.8" viewBox="0 0 16 16"><rect x="0.8" y="0.8" width="14.4" height="14.4" rx="0.8" fill="#fff" stroke="#333" stroke-width="1.5"/><path d="M3.4 8.0 L6.5 11.1 L12.7 4.5" fill="none" stroke="#222" stroke-width="1.6"/></svg>
<div style="left:99.47px;top:668.82px;font-size:14.67px;line-height:14.67px;color:#1e1e1e;-webkit-text-stroke:0.08px #1e1e1e;">15</div>
<div style="left:129.82px;top:668.82px;font-size:14.67px;line-height:14.67px;color:#1e1e1e;-webkit-text-stroke:0.08px #1e1e1e;transform:scaleX(1.0404);transform-origin:left;">07/25/2016</div>
<div style="left:255.57px;top:668.82px;font-size:14.67px;line-height:14.67px;color:#1e1e1e;-webkit-text-stroke:0.08px #1e1e1e;transform:scaleX(0.945);transform-origin:right;">-250.00</div>
<div style="left:458.56px;top:668.82px;font-size:14.67px;line-height:14.67px;color:#1e1e1e;-webkit-text-stroke:0.08px #1e1e1e;transform:scaleX(0.945);transform-origin:right;">250.00</div>
<div style="left:515.00px;top:666.82px;width:198.00px;height:20.67px;overflow:hidden"><div style="left:1.12px;top:2px;font-size:14.67px;line-height:14.67px;color:#1e1e1e;-webkit-text-stroke:0.08px #1e1e1e;transform:scaleX(0.9921);transform-origin:left;">Online Payment X To Vendor</div></div>
<div style="left:724.30px;top:666.82px;width:232.70px;height:20.67px;overflow:hidden"><div style="left:1.12px;top:2px;font-size:14.67px;line-height:14.67px;color:#1e1e1e;-webkit-text-stroke:0.08px #1e1e1e;transform:scaleX(0.9722);transform-origin:left;">Online Payment XXXXX To Vendor</div></div>
<div style="left:0px;top:688.47px;width:1043px;height:29.436px;background:#ffffff"></div>
<div style="left:0px;top:716.9060000000001px;width:1043px;height:1.1px;background:#c6c6c2"></div>
<div style="left:45.1px;top:688.47px;width:1.2px;height:29.436px;background:#d9d9d9"></div>
<div style="left:122.3px;top:688.47px;width:1.2px;height:29.436px;background:#d9d9d9"></div>
<div style="left:221.8px;top:688.47px;width:1.2px;height:29.436px;background:#d9d9d9"></div>
<div style="left:310.8px;top:688.47px;width:1.2px;height:29.436px;background:#d9d9d9"></div>
<div style="left:397.5px;top:688.47px;width:1.2px;height:29.436px;background:#d9d9d9"></div>
<div style="left:507.5px;top:688.47px;width:1.2px;height:29.436px;background:#d9d9d9"></div>
<div style="left:716.7px;top:688.47px;width:1.2px;height:29.436px;background:#d9d9d9"></div>
<div style="left:960.9px;top:688.47px;width:1.2px;height:29.436px;background:#d9d9d9"></div>
<svg style="position:absolute;left:3.2px;top:695.47px" width="16.8" height="16.8" viewBox="0 0 16 16"><rect x="0.8" y="0.8" width="14.4" height="14.4" rx="0.8" fill="#fff" stroke="#333" stroke-width="1.5"/><path d="M3.4 8.0 L6.5 11.1 L12.7 4.5" fill="none" stroke="#222" stroke-width="1.6"/></svg>
<div style="left:99.47px;top:698.25px;font-size:14.67px;line-height:14.67px;color:#1e1e1e;-webkit-text-stroke:0.08px #1e1e1e;">16</div>
<div style="left:129.82px;top:698.25px;font-size:14.67px;line-height:14.67px;color:#1e1e1e;-webkit-text-stroke:0.08px #1e1e1e;transform:scaleX(1.0404);transform-origin:left;">07/30/2016</div>
<div style="left:243.35px;top:698.25px;font-size:14.67px;line-height:14.67px;color:#1e1e1e;-webkit-text-stroke:0.08px #1e1e1e;transform:scaleX(0.945);transform-origin:right;">-2,887.68</div>
<div style="left:446.32px;top:698.25px;font-size:14.67px;line-height:14.67px;color:#1e1e1e;-webkit-text-stroke:0.08px #1e1e1e;transform:scaleX(0.945);transform-origin:right;">2,887.68</div>
<div style="left:515.00px;top:696.25px;width:198.00px;height:20.67px;overflow:hidden"><div style="left:1.12px;top:2px;font-size:14.67px;line-height:14.67px;color:#1e1e1e;-webkit-text-stroke:0.08px #1e1e1e;transform:scaleX(0.9522);transform-origin:left;">ADP TX/Fincl Svc ADP</div></div>
<div style="left:724.30px;top:696.25px;width:232.70px;height:20.67px;overflow:hidden"><div style="left:1.12px;top:2px;font-size:14.67px;line-height:14.67px;color:#1e1e1e;-webkit-text-stroke:0.08px #1e1e1e;transform:scaleX(0.9522);transform-origin:left;">ADP TX/Fincl Svc ADP</div></div>
<div style="left:0px;top:245.6px;width:1043px;height:1.8px;background:#c6c6c6"></div>
<div style="left:0px;top:789.8px;width:1043px;height:22px;background:#ededed"></div>
<div style="left:0px;top:811.3px;width:1043px;height:1px;background:#d4d4d4"></div>
<div style="left:18px;top:789.3px;width:531.7px;height:22.5px;background:#a6a6a6"></div>
<svg style="position:absolute;left:0px;top:792px" width="16" height="16" viewBox="0 0 16 16"><path d="M10.0 3.9 L4.6 7.9 L10.0 11.9" fill="none" stroke="#2a2a2a" stroke-width="2.3"/></svg>
<svg style="position:absolute;left:1024px;top:792px" width="16" height="16" viewBox="0 0 16 16"><path d="M6.0 4.3 L11.4 8.3 L6.0 12.3" fill="none" stroke="#2a2a2a" stroke-width="2.3"/></svg>
<svg style="position:absolute;left:548px;top:794px" width="20" height="26" viewBox="0 0 20 26"><path d="M1.6 1.4 L1.6 19.6 L5.9 15.6 L9.2 22.4 L11.9 21.1 L8.7 14.5 L14.6 14.5 Z" fill="#fff" stroke="#111" stroke-width="1.3" stroke-linejoin="round"/></svg>
<div style="left:2.5px;top:825.1px;width:172.4px;height:35px;background:#dedede;border:1px solid #a3a3a3;box-shadow:inset 0 0 0 1px rgba(190,190,190,0.5);box-sizing:border-box;"></div>
<div style="left:31.88px;top:836.38px;font-size:14.67px;line-height:14.67px;color:#1e1e1e;-webkit-text-stroke:0.08px #1e1e1e;transform:scaleX(1.0388);transform-origin:center;">Change +/- for all</div>
<div style="left:21.32px;top:872.98px;font-size:14.67px;line-height:14.67px;color:#1e1e1e;-webkit-text-stroke:0.08px #1e1e1e;transform:scaleX(0.9547);transform-origin:left;">Set year:</div>
<div style="left:85.4px;top:866.6px;width:119px;height:25.8px;background:#fff;border:1px solid #8a8a8a;box-sizing:border-box;box-shadow:inset 0 0 0 1px #e0e0e0"></div>
<div style="left:88.7px;top:869.6px;width:23.8px;height:19.6px;background:#e9e9e9;border:1px solid #bcbcbc;box-sizing:border-box"></div>
<div style="left:178px;top:869.6px;width:23.2px;height:19.6px;background:#e9e9e9;border:1px solid #bcbcbc;box-sizing:border-box"></div>
<svg style="position:absolute;left:95px;top:874.3px" width="10" height="10" viewBox="0 0 10 10"><path d="M6.5 1.5 L2.5 5 L6.5 8.5 Z" fill="#111"/></svg>
<svg style="position:absolute;left:184.5px;top:874.3px" width="10" height="10" viewBox="0 0 10 10"><path d="M3.5 1.5 L7.5 5 L3.5 8.5 Z" fill="#111"/></svg>
<div style="left:128.70px;top:872.98px;font-size:14.67px;line-height:14.67px;color:#1e1e1e;-webkit-text-stroke:0.08px #1e1e1e;transform:scaleX(0.973);transform-origin:center;">2020</div>
<svg style="position:absolute;left:231.3px;top:827.5px" width="16.8" height="16.8" viewBox="0 0 16 16"><rect x="0.8" y="0.8" width="14.4" height="14.4" rx="0.8" fill="#fff" stroke="#404040" stroke-width="1.5"/></svg>
<div style="left:253.72px;top:828.28px;font-size:14.67px;line-height:14.67px;color:#1e1e1e;-webkit-text-stroke:0.08px #1e1e1e;transform:scaleX(0.9853);transform-origin:left;">Switch Payee and Memo</div>
<svg style="position:absolute;left:231.3px;top:849.3px" width="16.8" height="16.8" viewBox="0 0 16 16"><rect x="0.8" y="0.8" width="14.4" height="14.4" rx="0.8" fill="#fff" stroke="#404040" stroke-width="1.5"/><path d="M3.4 8.0 L6.5 11.1 L12.7 4.5" fill="none" stroke="#222" stroke-width="1.6"/></svg>
<div style="left:253.72px;top:850.88px;font-size:14.67px;line-height:14.67px;color:#1e1e1e;-webkit-text-stroke:0.08px #1e1e1e;transform:scaleX(1.0081);transform-origin:left;">Get missing name from memo</div>
<svg style="position:absolute;left:231.3px;top:870.3px" width="16.8" height="16.8" viewBox="0 0 16 16"><rect x="0.8" y="0.8" width="14.4" height="14.4" rx="0.8" fill="#fff" stroke="#404040" stroke-width="1.5"/></svg>
<div style="left:253.72px;top:871.88px;font-size:14.67px;line-height:14.67px;color:#1e1e1e;-webkit-text-stroke:0.08px #1e1e1e;">Remove Memo</div>
<svg style="position:absolute;left:470.1px;top:827.5px" width="16.8" height="16.8" viewBox="0 0 16 16"><rect x="0.8" y="0.8" width="14.4" height="14.4" rx="0.8" fill="#fff" stroke="#404040" stroke-width="1.5"/><path d="M3.4 8.0 L6.5 11.1 L12.7 4.5" fill="none" stroke="#222" stroke-width="1.6"/></svg>
<div style="left:492.82px;top:828.28px;font-size:14.67px;line-height:14.67px;color:#1e1e1e;-webkit-text-stroke:0.08px #1e1e1e;transform:scaleX(0.9702);transform-origin:left;">Use Post date</div>
<div style="left:905.12px;top:826.98px;font-size:14.67px;line-height:14.67px;color:#1e1e1e;-webkit-text-stroke:0.08px #1e1e1e;transform:scaleX(0.9487);transform-origin:left;">Show Dates as:</div>
<div style="left:906px;top:843.3px;width:127.7px;height:28.7px;background:#e0e0e0;border:1px solid #acacac;box-sizing:border-box;"></div>
<div style="left:911.12px;top:850.98px;font-size:14.67px;line-height:14.67px;color:#1e1e1e;-webkit-text-stroke:0.08px #1e1e1e;">MM/DD/YYYY</div>
<svg style="position:absolute;left:1015px;top:853.5px" width="12" height="8" viewBox="0 0 12 8"><path d="M1.5 1.8 L6 6.2 L10.5 1.8" fill="none" stroke="#222" stroke-width="1.8"/></svg>
<svg style="position:absolute;left:1043px;top:500px" width="9" height="9" viewBox="0 0 9 9"><circle cx="4.5" cy="4.6" r="2.5" fill="#fff" stroke="#2a2a2a" stroke-width="1.5"/></svg>
<div style="left:1051px;top:142.2px;width:300px;height:653px;background:#fff;border:1px solid #d9d9d9;box-sizing:border-box;box-shadow:0 0.5px 0 #d9d9d9"></div>
<div style="left:1106.5px;top:113.3px;width:52.5px;height:29.5px;background:#ececec;border:1px solid #d9d9d9;border-bottom:none;box-sizing:border-box"></div>
<div style="left:1051px;top:111.4px;width:56px;height:31.8px;background:#fff;border:1px solid #d9d9d9;border-bottom:none;box-sizing:border-box"></div>
<div style="left:1062.92px;top:122.68px;font-size:14.67px;line-height:14.67px;color:#1e1e1e;-webkit-text-stroke:0.08px #1e1e1e;transform:scaleX(0.99);transform-origin:left;">QBO</div>
<div style="left:1118.92px;top:122.68px;font-size:14.67px;line-height:14.67px;color:#1e1e1e;-webkit-text-stroke:0.08px #1e1e1e;transform:scaleX(0.9068);transform-origin:left;">CSV</div>
<div style="left:1112.32px;top:145.58px;font-size:14.67px;line-height:14.67px;color:#1e1e1e;-webkit-text-stroke:0.08px #1e1e1e;transform:scaleX(0.9886);transform-origin:left;">Set Account ID and Type:</div>
<div style="left:1058.12px;top:169.28px;font-size:14.67px;line-height:14.67px;color:#1e1e1e;-webkit-text-stroke:0.08px #1e1e1e;transform:scaleX(1.0114);transform-origin:left;">Default</div>
<div style="left:1058.7px;top:185.5px;width:268.8px;height:26px;background:#e0e0e0;border:1px solid #acacac;box-sizing:border-box"></div>
<div style="left:1058.7px;top:185.5px;width:250px;height:26px;background:#fff;border:1px solid #707070;box-shadow:inset 0 0 0 1px rgba(130,130,130,0.45);box-sizing:border-box;border-radius:1px;"></div>
<svg style="position:absolute;left:1312.3px;top:196px" width="10" height="6" viewBox="0 0 10 6"><path d="M0.8 0.5 L9.2 0.5 L5 5.5 Z" fill="#444"/></svg>
<div style="left:1063.12px;top:192.78px;font-size:14.67px;line-height:14.67px;color:#1e1e1e;-webkit-text-stroke:0.08px #1e1e1e;transform:scaleX(0.9521);transform-origin:left;">10000001</div>
<div style="left:1058.7px;top:211.4px;width:268.8px;height:27.3px;background:#e0e0e0;border:1px solid #acacac;box-sizing:border-box;"></div>
<div style="left:1063.12px;top:219.28px;font-size:14.67px;line-height:14.67px;color:#1e1e1e;-webkit-text-stroke:0.08px #1e1e1e;transform:scaleX(0.9129);transform-origin:left;">CHECKING</div>
<svg style="position:absolute;left:1308.6px;top:222px" width="12" height="8" viewBox="0 0 12 8"><path d="M1.5 1.8 L6 6.2 L10.5 1.8" fill="none" stroke="#222" stroke-width="1.8"/></svg>
<div style="left:1119.56px;top:432.28px;font-size:14.67px;line-height:14.67px;color:#1e1e1e;-webkit-text-stroke:0.08px #1e1e1e;transform:scaleX(0.9667);transform-origin:right;">Currency:</div>
<div style="left:1188px;top:425.4px;width:152px;height:23.8px;background:#e0e0e0;border:1px solid #acacac;box-sizing:border-box;"></div>
<div style="left:1193.72px;top:432.28px;font-size:14.67px;line-height:14.67px;color:#1e1e1e;-webkit-text-stroke:0.08px #1e1e1e;transform:scaleX(0.9835);transform-origin:left;">USD</div>
<svg style="position:absolute;left:1320.5px;top:433.5px" width="12" height="8" viewBox="0 0 12 8"><path d="M1.5 1.8 L6 6.2 L10.5 1.8" fill="none" stroke="#222" stroke-width="1.8"/></svg>
<div style="left:1126.87px;top:461.28px;font-size:14.67px;line-height:14.67px;color:#1e1e1e;-webkit-text-stroke:0.08px #1e1e1e;transform:scaleX(0.9497);transform-origin:right;">Bank ID:</div>
<div style="left:1188.5px;top:455.7px;width:151.5px;height:22.69999999999999px;background:#e0e0e0;border:1px solid #acacac;box-sizing:border-box"></div>
<div style="left:1188.5px;top:455.7px;width:132.5px;height:22.69999999999999px;background:#fff;border:1px solid #707070;box-shadow:inset 0 0 0 1px rgba(130,130,130,0.45);box-sizing:border-box;border-radius:1px;"></div>
<svg style="position:absolute;left:1325px;top:464.04999999999995px" width="10" height="6" viewBox="0 0 10 6"><path d="M0.8 0.5 L9.2 0.5 L5 5.5 Z" fill="#444"/></svg>
<div style="left:1113.84px;top:491.58px;font-size:14.67px;line-height:14.67px;color:#1e1e1e;-webkit-text-stroke:0.08px #1e1e1e;transform:scaleX(0.9516);transform-origin:right;">Branch ID:</div>
<div style="left:1188.5px;top:485px;width:151.5px;height:24.80000000000001px;background:#e0e0e0;border:1px solid #acacac;box-sizing:border-box"></div>
<div style="left:1188.5px;top:485px;width:132.5px;height:24.80000000000001px;background:#fff;border:1px solid #707070;box-shadow:inset 0 0 0 1px rgba(130,130,130,0.45);box-sizing:border-box;border-radius:1px;"></div>
<svg style="position:absolute;left:1325px;top:494.4px" width="10" height="6" viewBox="0 0 10 6"><path d="M0.8 0.5 L9.2 0.5 L5 5.5 Z" fill="#444"/></svg>
<div style="left:1078.84px;top:521.88px;font-size:14.67px;line-height:14.67px;color:#1e1e1e;-webkit-text-stroke:0.08px #1e1e1e;transform:scaleX(0.934);transform-origin:right;">Bank INTU.BID:</div>
<div style="left:1188.5px;top:516.3px;width:151.5px;height:22.700000000000045px;background:#e0e0e0;border:1px solid #acacac;box-sizing:border-box"></div>
<div style="left:1188.5px;top:516.3px;width:132.5px;height:22.700000000000045px;background:#fff;border:1px solid #707070;box-shadow:inset 0 0 0 1px rgba(130,130,130,0.45);box-sizing:border-box;border-radius:1px;"></div>
<svg style="position:absolute;left:1325px;top:524.65px" width="10" height="6" viewBox="0 0 10 6"><path d="M0.8 0.5 L9.2 0.5 L5 5.5 Z" fill="#444"/></svg>
<div style="left:1193.72px;top:521.88px;font-size:14.67px;line-height:14.67px;color:#1e1e1e;-webkit-text-stroke:0.08px #1e1e1e;">3000</div>
<div style="left:1082.9px;top:543.4px;width:57px;height:26.2px;background:#dedede;border:1px solid #a3a3a3;box-shadow:inset 0 0 0 1px rgba(190,190,190,0.5);box-sizing:border-box;"></div>
<div style="left:1101.21px;top:550.78px;font-size:14.67px;line-height:14.67px;color:#1e1e1e;-webkit-text-stroke:0.08px #1e1e1e;">US</div>
<div style="left:1143px;top:543.4px;width:69px;height:26.2px;background:#dedede;border:1px solid #a3a3a3;box-shadow:inset 0 0 0 1px rgba(190,190,190,0.5);box-sizing:border-box;"></div>
<div style="left:1151.83px;top:550.78px;font-size:14.67px;line-height:14.67px;color:#1e1e1e;-webkit-text-stroke:0.08px #1e1e1e;">Canada</div>
<div style="left:1241px;top:543.4px;width:69.2px;height:26.2px;background:#dedede;border:1px solid #a3a3a3;box-shadow:inset 0 0 0 1px rgba(190,190,190,0.5);box-sizing:border-box;"></div>
<div style="left:1251.55px;top:550.78px;font-size:14.67px;line-height:14.67px;color:#1e1e1e;-webkit-text-stroke:0.08px #1e1e1e;">Lookup</div>
<div style="left:1126.54px;top:586.88px;font-size:14.67px;line-height:14.67px;color:#1e1e1e;-webkit-text-stroke:0.08px #1e1e1e;transform:scaleX(0.9446);transform-origin:right;">Balance:</div>
<div style="left:1188px;top:580.2px;width:151px;height:23.6px;background:#fff;border:1px solid #707070;box-shadow:inset 0 0 0 1px rgba(130,130,130,0.45);box-sizing:border-box;border-radius:1px;"></div>
<div style="left:1307.76px;top:586.48px;font-size:14.67px;line-height:14.67px;color:#1e1e1e;-webkit-text-stroke:0.08px #1e1e1e;">0.00</div>
<svg style="position:absolute;left:1060.3px;top:613.3px" width="16.8" height="16.8" viewBox="0 0 16 16"><rect x="0.8" y="0.8" width="14.4" height="14.4" rx="0.8" fill="#fff" stroke="#404040" stroke-width="1.5"/></svg>
<div style="left:1083.42px;top:615.68px;font-size:14.67px;line-height:14.67px;color:#1e1e1e;-webkit-text-stroke:0.08px #1e1e1e;transform:scaleX(0.9914);transform-origin:left;">Deterministic references</div>
<svg style="position:absolute;left:1060.3px;top:644.0px" width="16.8" height="16.8" viewBox="0 0 16 16"><rect x="0.8" y="0.8" width="14.4" height="14.4" rx="0.8" fill="#fff" stroke="#404040" stroke-width="1.5"/></svg>
<div style="left:1083.42px;top:645.68px;font-size:14.67px;line-height:14.67px;color:#1e1e1e;-webkit-text-stroke:0.08px #1e1e1e;transform:scaleX(0.9516);transform-origin:left;">Regenerate References</div>
<svg style="position:absolute;left:1060.3px;top:673.5px" width="16.8" height="16.8" viewBox="0 0 16 16"><rect x="0.8" y="0.8" width="14.4" height="14.4" rx="0.8" fill="#fff" stroke="#404040" stroke-width="1.5"/><path d="M3.4 8.0 L6.5 11.1 L12.7 4.5" fill="none" stroke="#222" stroke-width="1.6"/></svg>
<div style="left:1083.42px;top:674.58px;font-size:14.67px;line-height:14.67px;color:#1e1e1e;-webkit-text-stroke:0.08px #1e1e1e;">Allow non-numeric checks</div>
<svg style="position:absolute;left:1060.3px;top:703.0px" width="16.8" height="16.8" viewBox="0 0 16 16"><rect x="0.8" y="0.8" width="14.4" height="14.4" rx="0.8" fill="#fff" stroke="#404040" stroke-width="1.5"/></svg>
<div style="left:1083.42px;top:703.78px;font-size:14.67px;line-height:14.67px;color:#1e1e1e;-webkit-text-stroke:0.08px #1e1e1e;">Allow empty name</div>
<svg style="position:absolute;left:1060.3px;top:732.0px" width="16.8" height="16.8" viewBox="0 0 16 16"><rect x="0.8" y="0.8" width="14.4" height="14.4" rx="0.8" fill="#fff" stroke="#404040" stroke-width="1.5"/><path d="M3.4 8.0 L6.5 11.1 L12.7 4.5" fill="none" stroke="#222" stroke-width="1.6"/></svg>
<div style="left:1083.42px;top:733.28px;font-size:14.67px;line-height:14.67px;color:#1e1e1e;-webkit-text-stroke:0.08px #1e1e1e;transform:scaleX(0.972);transform-origin:left;">Separate Splits</div>
<svg style="position:absolute;left:1066.3px;top:811.3px" width="16.8" height="16.8" viewBox="0 0 16 16"><rect x="0.8" y="0.8" width="14.4" height="14.4" rx="0.8" fill="#fff" stroke="#404040" stroke-width="1.5"/></svg>
<div style="left:1089.02px;top:814.78px;font-size:14.67px;line-height:14.67px;color:#1e1e1e;-webkit-text-stroke:0.08px #1e1e1e;transform:scaleX(0.989);transform-origin:left;">Open after save</div>
<div style="left:1064.3px;top:834.7px;width:258px;height:40px;background:#dedede;border:1px solid #a3a3a3;box-shadow:inset 0 0 0 1px rgba(190,190,190,0.5);box-sizing:border-box;"></div>
<div style="left:1167.74px;top:849.28px;font-size:14.67px;line-height:14.67px;color:#1e1e1e;-webkit-text-stroke:0.08px #1e1e1e;transform:scaleX(1.0208);transform-origin:center;">Convert</div>
</body></html>
